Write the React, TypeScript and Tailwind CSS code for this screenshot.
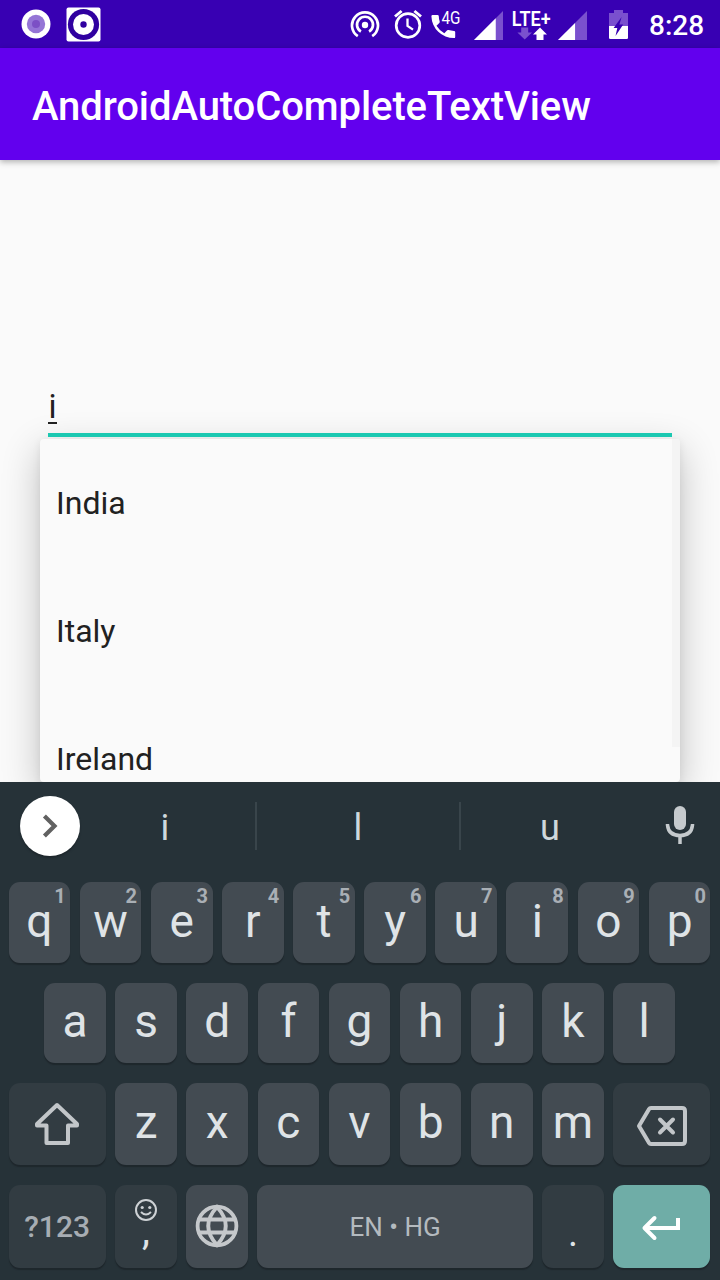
import type { ReactNode } from "react";

const COUNTRIES = ["India", "Italy", "Ireland"];
const TOP_ROW = ["q", "w", "e", "r", "t", "y", "u", "i", "o", "p"];
const HOME_ROW = ["a", "s", "d", "f", "g", "h", "j", "k", "l"];
const BOTTOM_ROW = ["z", "x", "c", "v", "b", "n", "m"];

function SignalIcon({ level }: { level: number }) {
  return (
    <svg width="29" height="29" viewBox="0 0 28 28">
      <path d="M28 0V28H0Z" fill="#7a50ce" />
      <path d={`M0 28H${level}V${28 - level}Z`} fill="#fff" />
    </svg>
  );
}

function StatusBar() {
  return (
    <div className="flex h-12 shrink-0 items-center bg-[#3800b3] text-white">
      <svg className="ml-[21px]" width="30" height="30" viewBox="0 0 30 30">
        <circle cx="15" cy="15" r="14.5" fill="#fff" />
        <circle cx="15" cy="15" r="9.2" fill="#9575d6" />
        <circle cx="15" cy="15" r="4" fill="#7c50c5" />
      </svg>
      <svg className="ml-[15px]" width="35" height="35" viewBox="0 0 35 35">
        <rect x="0.5" y="0.5" width="34" height="34" rx="2" fill="#fff" />
        <circle cx="17.5" cy="17.5" r="15.6" fill="#3000a0" />
        <circle cx="17.5" cy="17.5" r="10.5" fill="#fff" />
        <circle cx="17.5" cy="17.5" r="3.2" fill="#3000a0" />
      </svg>
      <svg className="ml-[249px]" width="30" height="30" viewBox="0 0 30 30" fill="none" stroke="#fff" strokeWidth="2.7">
        <path d="M7.8 27.2A13 13 0 1 1 22.2 27.2" />
        <path d="M10.9 22.6A8 8 0 1 1 19.1 22.6" />
        <circle cx="15" cy="16" r="3.2" fill="#fff" stroke="none" />
      </svg>
      <svg className="ml-[13px]" width="30" height="30" viewBox="0 0 30 30" fill="none" stroke="#fff" strokeWidth="2.7">
        <circle cx="15" cy="16.5" r="11.8" />
        <path d="M2 7.5L8.6 2M28 7.5L21.4 2" strokeWidth="2.9" />
        <path d="M14.5 9.5V17L20 20.6" strokeWidth="2.3" />
      </svg>
      <svg className="ml-[7px]" width="32" height="30" viewBox="0 0 32 30">
        <path d="M2.6 6H7.5A1.3 1.3 0 0 1 8.8 7.2Q8.9 10.4 9.7 12.6A1.4 1.4 0 0 1 9.3 14L6.5 16.8A20 20 0 0 0 14.3 24.2L17.2 21.3A1.4 1.4 0 0 1 18.6 21Q21 21.8 24 21.9A1.2 1.2 0 0 1 25.2 23.1V27.9A1.2 1.2 0 0 1 24 29.1A22.6 22.6 0 0 1 1.4 7.2A1.2 1.2 0 0 1 2.6 6Z" fill="#fff" />
        <text transform="translate(11.5 15.2) scale(0.83 1)" fontFamily="Roboto" fontSize="18.4" fill="#fff">4G</text>
      </svg>
      <div className="mt-[2px] ml-[11.5px] flex"><SignalIcon level={21} /></div>
      <svg className="ml-[8.5px]" width="42" height="34" viewBox="0 0 42 34">
        <g transform="translate(0.8 18.8) scale(0.9 1)">
          <text fontFamily="Roboto" fontWeight="600" fontSize="20" fill="#fff">LTE+</text>
        </g>
        <path d="M10.2 20.5H17.2V25.5H21L13.7 32.5L6.4 25.5H10.2Z" fill="#7a50ce" />
        <path d="M25.5 33V27.5H22L29 20.5L36 27.5H32.5V33Z" fill="#fff" />
      </svg>
      <div className="mt-[2px] ml-[5px] flex"><SignalIcon level={16.5} /></div>
      <svg className="ml-[22px]" width="19" height="31" viewBox="0 0 19 31">
        <path d="M5 1H14V4H19V17H0V4H5Z" fill="#7a50ce" />
        <path d="M0 17H19V28.7Q19 30 17.7 30H1.3Q0 30 0 28.7Z" fill="#fff" />
        <path d="M12.6 8L4.6 19H8.3L6.5 27L14.2 15.5H10.4Z" fill="#3800b3" />
      </svg>
      <span className="mt-[3px] ml-[21px] text-[28px] leading-none font-medium">8:28</span>
    </div>
  );
}

function AppBar() {
  return (
    <header className="relative flex h-28 shrink-0 items-center bg-[#6200ee] pl-8 shadow-[0_2px_6px_rgba(0,0,0,0.3)]">
      <h1 className="mt-[5px] text-[40px] leading-none font-medium tracking-[-0.09px] text-white">AndroidAutoCompleteTextView</h1>
    </header>
  );
}

function CountryField() {
  return (
    <main className="relative flex h-[622px] shrink-0 flex-col overflow-hidden bg-[#fafafa] px-12 pt-[225px] text-[#212121]">
      <div className="relative z-10 flex h-[52px] flex-col border-b-4 border-[#1bc8b1]">
        <span className="flex h-[38.5px] w-[9px] justify-center border-b-2 border-[#212121] pt-[4px] text-[33px] leading-[35px]">
          <span className="h-[33px]">i</span>
        </span>
      </div>
      <ul className="absolute top-[279px] left-10 h-[343px] w-[640px] overflow-hidden rounded-[4px] bg-[#fafafa] shadow-[0_12px_38px_rgba(0,0,0,0.24),0_2px_8px_rgba(0,0,0,0.07)]">
        {COUNTRIES.map((name) => (
          <li key={name} className="flex h-32 items-center pl-4 text-[32px] leading-none">
            <span className="mb-px">{name}</span>
          </li>
        ))}
        <li aria-hidden="true" className="absolute top-0 right-0 h-[308px] w-2 bg-[#f4f4f4]" />
      </ul>
    </main>
  );
}

function Key({ label, hint }: { label: string; hint?: string }) {
  return (
    <button className="relative flex h-full w-[61.7px] shrink-0 items-center justify-center rounded-[11px] bg-[#434b52] pb-[4px] text-[46px] leading-none text-[#dfe3e6] shadow-[0_2px_1px_#1e272c]">
      {label}
      {hint && <span className="absolute top-[4px] right-[4.5px] text-[20px] leading-none font-bold text-[#a9afb5]">{hint}</span>}
    </button>
  );
}

function FunctionKey({ size, tone = "bg-[#323c42]", children }: { size: string; tone?: string; children: ReactNode }) {
  return (
    <button className={`flex h-full shrink-0 items-center justify-center rounded-[11px] shadow-[0_2px_1px_#1e272c] ${size} ${tone}`}>
      {children}
    </button>
  );
}

function Suggestions() {
  return (
    <div className="flex h-[100px] shrink-0 items-start text-[36px] leading-none text-[#cfd8dc]">
      <div className="mt-[14px] ml-5 flex size-[60px] shrink-0 items-center justify-center rounded-full bg-white shadow-[0_2px_2px_#1e272c]">
        <svg className="ml-[2px]" width="18" height="26" viewBox="0 0 18 26" fill="none" stroke="#616161" strokeWidth="4.2">
          <path d="M2.4 3L12.5 13L2.4 23" />
        </svg>
      </div>
      <span className="mt-[28px] ml-[-6px] w-[181px] pl-px text-center">i</span>
      <span className="mt-5 h-12 w-[2px] bg-[#39454b]" />
      <span className="mt-[28px] w-[202px] text-center">l</span>
      <span className="mt-5 h-12 w-[2px] bg-[#39454b]" />
      <span className="mt-[28px] w-[178px] text-center">u</span>
      <svg className="mt-[23px] ml-[26px]" width="30" height="40" viewBox="0 0 30 40">
        <rect x="9" y="1" width="12" height="24" rx="6" fill="#c5cacd" />
        <path d="M2.5 19V20Q3.5 30.5 15 30.5T27.5 20V19M15 30V39" fill="none" stroke="#c5cacd" strokeWidth="3.5" />
      </svg>
    </div>
  );
}

function Keyboard() {
  return (
    <section className="flex h-[498px] shrink-0 flex-col bg-[#263238]">
      <Suggestions />
      <div className="flex h-[81px] shrink-0 justify-center gap-[9.45px] pr-px">
        {TOP_ROW.map((letter, i) => (
          <Key key={letter} label={letter} hint={String((i + 1) % 10)} />
        ))}
      </div>
      <div className="mt-[20px] flex h-[80px] shrink-0 justify-center gap-[9.45px] pr-px">
        {HOME_ROW.map((letter) => (
          <Key key={letter} label={letter} />
        ))}
      </div>
      <div className="mt-[20px] flex h-[82px] shrink-0 justify-center gap-[9.45px] pr-px">
        <FunctionKey size="w-[97.2px]">
          <svg width="48" height="46" viewBox="0 0 48 46" fill="none" stroke="#c2c6c9" strokeWidth="4" strokeLinejoin="round">
            <path d="M24 4L4 23V24.5H13.5V42H35V24.5H44V23Z" />
          </svg>
        </FunctionKey>
        {BOTTOM_ROW.map((letter) => (
          <Key key={letter} label={letter} />
        ))}
        <FunctionKey size="w-[97.2px]">
          <svg className="mt-[4px]" width="52" height="42" viewBox="0 0 52 42" fill="none" stroke="#c2c6c9" strokeWidth="4" strokeLinejoin="round" strokeLinecap="round">
            <path d="M15 3H46Q49 3 49 6V36Q49 39 46 39H15Q13.7 39 12.8 37.6L3 21L12.8 4.4Q13.7 3 15 3Z" />
            <path d="M24 14.5L37 27.5M37 14.5L24 27.5" />
          </svg>
        </FunctionKey>
      </div>
      <div className="mt-[20px] flex h-[83px] shrink-0 justify-center gap-[9.45px] pr-px">
        <FunctionKey size="w-[97.2px]">
          <span className="mt-[1px] text-[30px] leading-none font-medium text-[#a7adb3]">?123</span>
        </FunctionKey>
        <FunctionKey size="w-[61.7px]">
          <span className="flex h-full flex-col items-center pt-[12.5px] text-[40px] leading-none text-[#dfe3e6]">
            <svg width="24" height="24" viewBox="0 0 24 24" fill="none" stroke="#ced2d5" strokeWidth="2">
              <circle cx="12" cy="12" r="10" />
              <circle cx="8.2" cy="9.5" r="1.6" fill="#ced2d5" stroke="none" />
              <circle cx="15.8" cy="9.5" r="1.6" fill="#ced2d5" stroke="none" />
              <path d="M7 14Q12 19 17 14" />
            </svg>
            <span className="mt-[-11px]">,</span>
          </span>
        </FunctionKey>
        <FunctionKey size="w-[61.7px]" tone="bg-[#434b52]">
          <svg className="mb-px" width="44" height="44" viewBox="0 0 44 44" fill="none" stroke="#c5c8cb" strokeWidth="3.8">
            <circle cx="22" cy="22" r="19.4" />
            <path d="M22 3Q4.5 22 22 41Q39.5 22 22 3ZM4 15.5H40M4 28.5H40" />
          </svg>
        </FunctionKey>
        <FunctionKey size="w-[275.3px]" tone="bg-[#434b52]">
          <span className="mt-px text-[26px] leading-none text-[#b4babf]">EN • HG</span>
        </FunctionKey>
        <FunctionKey size="w-[61.7px]">
          <span className="mt-[13px] text-[38px] leading-none text-[#dfe3e6]">.</span>
        </FunctionKey>
        <FunctionKey size="w-[97.2px]" tone="bg-[#6fada7]">
          <svg className="mt-[3px] ml-[-2px]" width="40" height="26" viewBox="0 0 40 26" fill="none" stroke="#fff" strokeWidth="4">
            <path d="M37 3V13H4" />
            <path d="M13.5 3L3.5 13L13.5 23" strokeLinecap="round" strokeLinejoin="round" />
          </svg>
        </FunctionKey>
      </div>
    </section>
  );
}

export default function App() {
  return (
    <div className="flex h-[1280px] w-[720px] flex-col overflow-hidden bg-[#fafafa] font-[Roboto,sans-serif]">
      <StatusBar />
      <div className="relative z-10">
        <AppBar />
      </div>
      <CountryField />
      <Keyboard />
    </div>
  );
}
